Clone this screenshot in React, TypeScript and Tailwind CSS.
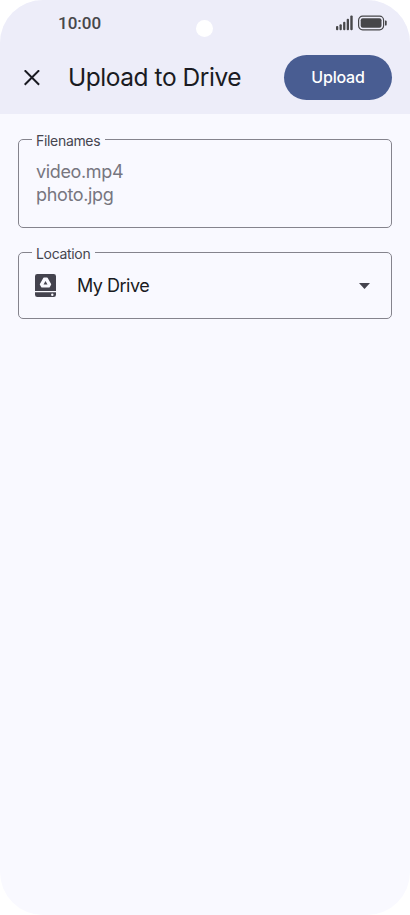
import type { ReactNode } from "react";

type FieldProps = {
  label: string;
  className: string;
  children: ReactNode;
};

// Outlined text field, the legend cuts the top border
function OutlinedField({ label, className, children }: FieldProps) {
  return (
    <fieldset className={`min-w-0 rounded-[5px] border border-[#85848d] ${className}`}>
      <legend className="ml-[13px] h-5 pr-[5px] pl-[4px] font-[Inter,sans-serif] text-[14px] leading-[23px] tracking-[-0.32px] text-[#46464f]">
        {label}
      </legend>
      {children}
    </fieldset>
  );
}

function SignalIcon() {
  return (
    <svg width="18" height="16" viewBox="0 0 18 16" fill="#47474a">
      <rect x="0" y="11" width="2.3" height="4.3" rx="1" />
      <rect x="3.5" y="9.3" width="2.3" height="6" rx="1" />
      <rect x="7.1" y="6.8" width="2.3" height="8.5" rx="1" />
      <rect x="10.7" y="3.8" width="2.3" height="11.5" rx="1" />
      <rect x="14.3" y="0.4" width="2.4" height="14.9" rx="1" />
    </svg>
  );
}

function BatteryIcon() {
  return (
    <svg width="30" height="16" viewBox="0 0 30 16" fill="#47474a">
      <rect x="0.6" y="1.2" width="25" height="13.6" rx="4" fill="none" stroke="#47474a" strokeWidth="1.2" />
      <rect x="2.7" y="3.3" width="20.8" height="9.4" rx="2" />
      <path d="M27 5.4h.5a1.2 1.2 0 0 1 1.2 1.2v2.8a1.2 1.2 0 0 1-1.2 1.2H27z" />
    </svg>
  );
}

function DriveIcon() {
  return (
    <svg width="21" height="24" viewBox="0 0 21 24">
      <path d="M2.3 0h16.4A2.3 2.3 0 0 1 21 2.3V17H0V2.3A2.3 2.3 0 0 1 2.3 0z" fill="#44434e" />
      <path d="M0 18.3h21v2.4a2.3 2.3 0 0 1-2.3 2.3H2.3A2.3 2.3 0 0 1 0 20.7z" fill="#44434e" />
      <circle cx="17.3" cy="20.7" r="1.2" fill="#f9f9ff" />
      <path d="M9.1 4.2h2.8l3.5 6.1-1.4 2.5H7l-1.4-2.5z" fill="#f9f9ff" stroke="#f9f9ff" strokeWidth="1.6" strokeLinejoin="round" />
      <path d="M10.5 7l2 3.6h-4z" fill="#44434e" />
    </svg>
  );
}

export default function App() {
  return (
    <div className="h-[915px] w-[410px] bg-white">
      <div className="relative flex h-full flex-col overflow-hidden rounded-[43px] bg-[#f9f9ff]">
        <header className="h-[114px] bg-[#ededf9]">
          <div className="flex h-[46px] items-center justify-between pr-[22px] pl-[58px]">
            <span className="font-[Roboto,sans-serif] text-[17px] leading-[18px] font-medium text-[#47474a]">
              10:00
            </span>
            <div className="flex items-center gap-1">
              <SignalIcon />
              <BatteryIcon />
            </div>
          </div>
          <div className="flex h-[63px] items-center pr-[18px] pl-6">
            <svg width="16" height="16" viewBox="0 0 16 16" fill="none" stroke="#1a1b22" strokeWidth="2">
              <path d="M.7.3l14.4 14.4M15.1.3L.7 14.7" />
            </svg>
            <h1 className="ml-[28px] pb-[2px] font-[Inter,sans-serif] text-[24.5px] leading-8 tracking-[-0.45px] whitespace-nowrap text-[#1a1b22]">
              Upload to Drive
            </h1>
            <button className="ml-auto h-[45px] w-[108px] rounded-full bg-[#495d92] pb-[2px] font-[Inter,sans-serif] text-[16px] font-medium tracking-[-0.2px] text-white">
              Upload
            </button>
          </div>
        </header>
        {/* camera cutout */}
        <div className="absolute top-5 left-[196px] size-[17px] rounded-full bg-white" />
        <main className="flex flex-col gap-[14px] px-[18px] pt-[15px]">
          <OutlinedField label="Filenames" className="h-[99px]">
            <div className="pt-[11px] pl-[17px] font-[Inter,sans-serif] text-[18px] leading-[23px] tracking-[-0.35px] text-[#77767f]">
              <p>video.mp4</p>
              <p>photo.jpg</p>
            </div>
          </OutlinedField>
          <OutlinedField label="Location" className="h-[77px]">
            <div className="flex h-[47px] items-center pr-[21px] pl-4">
              <DriveIcon />
              <span className="ml-[21px] font-[Inter,sans-serif] text-[18px] tracking-[-0.5px] text-[#1a1b22]">My Drive</span>
              <svg className="ml-auto" width="11" height="6" viewBox="0 0 11 6" fill="#44434e">
                <path d="M0 0h11L5.5 6z" />
              </svg>
            </div>
          </OutlinedField>
        </main>
      </div>
    </div>
  );
}
